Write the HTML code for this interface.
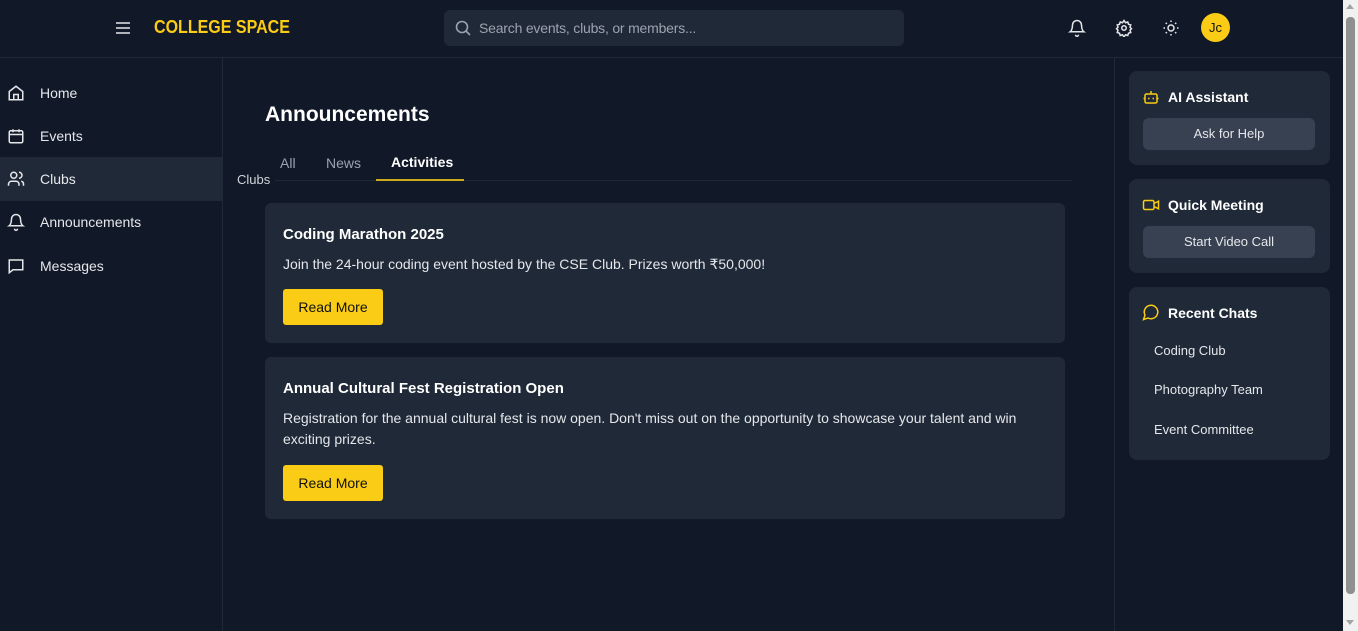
<!DOCTYPE html>
<html><head><style>
*{box-sizing:border-box;margin:0;padding:0}
body{width:1358px;height:631px;overflow:hidden;background:#111827;font-family:"Liberation Sans",sans-serif;color:#e5e7eb;position:relative}
.hdr{position:absolute;left:0;top:0;width:1343px;height:58px;border-bottom:1px solid #1f2937}
.side{position:absolute;left:0;top:58px;width:223px;height:573px;border-right:1px solid #1f2937}
.nav{position:absolute;left:0;width:222px;height:44px;display:flex;align-items:center;font-size:14px;color:#e5e7eb}
.nav svg{position:absolute;left:7px}
.nav span{position:absolute;left:40px}
.right{position:absolute;left:1114px;top:58px;width:229px;height:573px;border-left:1px solid #1f2937}
.pc{position:absolute;left:14px;width:201px;background:#1f2937;border-radius:8px}
.pc h4{position:absolute;left:39px;font-size:14px;font-weight:bold;color:#fff}
.pc .b{position:absolute;left:14px;width:172px;height:32px;background:#374151;border-radius:6px;font-size:13px;text-align:center;line-height:32px;color:#e5e7eb}
.card{position:absolute;left:265px;width:800px;background:#1f2937;border-radius:6px}
.card h3{position:absolute;left:18px;font-size:15px;font-weight:bold;color:#fff}
.card p{position:absolute;left:18px;width:770px;font-size:14px;line-height:21px;color:#e5e7eb}
.rm{position:absolute;left:18px;width:100px;height:36px;background:#facc15;border-radius:3px;color:#111;font-size:14px;text-align:center;line-height:36px}
</style></head><body>
<div class="hdr">
<svg style="position:absolute;left:115px;top:20px" width="16" height="16" viewBox="0 0 16 16" stroke="#e5e7eb" stroke-width="1.6"><path d="M1 3h14M1 8h14M1 13h14"/></svg>
<div style="position:absolute;left:154px;top:17px;font-size:18px;font-weight:bold;color:#facc15;transform:scaleX(0.89);transform-origin:left">COLLEGE SPACE</div>
<div style="position:absolute;left:444px;top:10px;width:460px;height:36px;background:#1f2937;border-radius:6px">
<svg style="position:absolute;left:11px;top:10px" width="16" height="16" viewBox="0 0 16 16" fill="none" stroke="#9ca3af" stroke-width="1.6"><circle cx="7" cy="7" r="5.5"/><path d="M11 11l4 4"/></svg>
<span style="position:absolute;left:35px;top:10px;font-size:14px;color:#9ca3af;letter-spacing:-0.2px">Search events, clubs, or members...</span></div>
<svg style="position:absolute;left:1068px;top:19px" width="18" height="18" viewBox="0 0 24 24" fill="none" stroke="#e5e7eb" stroke-width="2"><path d="M6 8a6 6 0 0112 0c0 7 3 9 3 9H3s3-2 3-9M10 21a2 2 0 004 0"/></svg>
<svg style="position:absolute;left:1115px;top:19px" width="18" height="18" viewBox="0 0 24 24" fill="none" stroke="#e5e7eb" stroke-width="2"><circle cx="12" cy="12" r="3"/><path d="M12 2l2 3 3-1 1 3 3 1-1 3 2 2-2 2 1 3-3 1-1 3-3-1-2 3-2-3-3 1-1-3-3-1 1-3-2-2 2-2-1-3 3-1 1-3 3 1z"/></svg>
<svg style="position:absolute;left:1162px;top:19px" width="18" height="18" viewBox="0 0 24 24" fill="none" stroke="#e5e7eb" stroke-width="2"><circle cx="12" cy="12" r="4"/><path d="M12 2v2M12 20v2M2 12h2M20 12h2M5 5l1.5 1.5M17.5 17.5L19 19M5 19l1.5-1.5M17.5 6.5L19 5"/></svg>
<div style="position:absolute;left:1201px;top:13px;width:29px;height:29px;border-radius:50%;background:#facc15;color:#111;font-size:13px;text-align:center;line-height:29px">Jc</div>
</div>
<div class="side">
<div class="nav" style="top:13px"><svg width="18" height="18" viewBox="0 0 24 24" fill="none" stroke="#e5e7eb" stroke-width="2"><path d="M3 10l9-7 9 7v11H3zM9 21v-7h6v7"/></svg><span>Home</span></div>
<div class="nav" style="top:56px"><svg width="18" height="18" viewBox="0 0 24 24" fill="none" stroke="#e5e7eb" stroke-width="2"><rect x="3" y="5" width="18" height="16" rx="2"/><path d="M3 10h18M8 3v4M16 3v4"/></svg><span>Events</span></div>
<div class="nav" style="top:99px;background:#1f2937"><svg width="18" height="18" viewBox="0 0 24 24" fill="none" stroke="#e5e7eb" stroke-width="2"><circle cx="9" cy="7" r="4"/><path d="M2 21v-2a4 4 0 014-4h6a4 4 0 014 4v2M16 3a4 4 0 010 8M22 21v-2a4 4 0 00-3-4"/></svg><span>Clubs</span></div>
<div class="nav" style="top:142px"><svg width="18" height="18" viewBox="0 0 24 24" fill="none" stroke="#e5e7eb" stroke-width="2"><path d="M6 8a6 6 0 0112 0c0 7 3 9 3 9H3s3-2 3-9M10 21a2 2 0 004 0"/></svg><span>Announcements</span></div>
<div class="nav" style="top:186px"><svg width="18" height="18" viewBox="0 0 24 24" fill="none" stroke="#e5e7eb" stroke-width="2"><path d="M3 4h18v13H8l-5 4z"/></svg><span>Messages</span></div>
</div>
<div style="position:absolute;left:265px;top:103px;font-size:21px;font-weight:bold;color:#fff">Announcements</div>
<div style="position:absolute;left:237px;top:172px;font-size:13px;color:#d1d5db">Clubs</div>
<div style="position:absolute;left:275px;top:180px;width:797px;height:1px;background:#1f2937"></div>
<div style="position:absolute;left:280px;top:155px;font-size:14px;color:#9ca3af">All</div>
<div style="position:absolute;left:326px;top:155px;font-size:14px;color:#9ca3af">News</div>
<div style="position:absolute;left:391px;top:154px;font-size:14px;font-weight:bold;color:#fff">Activities</div>
<div style="position:absolute;left:376px;top:179px;width:88px;height:2px;background:#facc15;opacity:.8"></div>
<div class="card" style="top:203px;height:140px"><h3 style="top:23px">Coding Marathon 2025</h3><p style="top:51px">Join the 24-hour coding event hosted by the CSE Club. Prizes worth ₹50,000!</p><div class="rm" style="top:86px">Read More</div></div>
<div class="card" style="top:357px;height:162px"><h3 style="top:23px">Annual Cultural Fest Registration Open</h3><p style="top:51px">Registration for the annual cultural fest is now open. Don't miss out on the opportunity to showcase your talent and win exciting prizes.</p><div class="rm" style="top:108px">Read More</div></div>
<div class="right">
<div class="pc" style="top:13px;height:94px"><svg style="position:absolute;left:13px;top:17px" width="18" height="18" viewBox="0 0 24 24" fill="none" stroke="#facc15" stroke-width="2"><rect x="4" y="8" width="16" height="12" rx="2"/><path d="M12 4v4M2 14h2M20 14h2M9 13v2M15 13v2"/></svg><h4 style="top:18px">AI Assistant</h4><div class="b" style="top:47px">Ask for Help</div></div>
<div class="pc" style="top:121px;height:94px"><svg style="position:absolute;left:13px;top:17px" width="18" height="18" viewBox="0 0 24 24" fill="none" stroke="#facc15" stroke-width="2"><rect x="2" y="6" width="14" height="12" rx="2"/><path d="M16 10l6-3v10l-6-3"/></svg><h4 style="top:18px">Quick Meeting</h4><div class="b" style="top:47px">Start Video Call</div></div>
<div class="pc" style="top:229px;height:173px"><svg style="position:absolute;left:13px;top:16px" width="18" height="18" viewBox="0 0 24 24" fill="none" stroke="#facc15" stroke-width="2"><path d="M7.9 20A9 9 0 1 0 4 16.1L2 22z"/></svg><h4 style="top:18px">Recent Chats</h4>
<div style="position:absolute;left:25px;top:56px;font-size:13px">Coding Club</div>
<div style="position:absolute;left:25px;top:95px;font-size:13px">Photography Team</div>
<div style="position:absolute;left:25px;top:135px;font-size:13px">Event Committee</div></div>
</div>
<div style="position:absolute;left:1343px;top:0;width:15px;height:631px;background:#f1f1f1">
<div style="position:absolute;left:3px;top:17px;width:9px;height:577px;background:#8f8f8f;border-radius:4px"></div>
<div style="position:absolute;left:3px;top:4px;border:4.5px solid transparent;border-bottom:5px solid #a3a3a3;border-top:0"></div>
<div style="position:absolute;left:3px;top:620px;border:4.5px solid transparent;border-top:5px solid #a3a3a3;border-bottom:0"></div>
</div>
</body></html>
